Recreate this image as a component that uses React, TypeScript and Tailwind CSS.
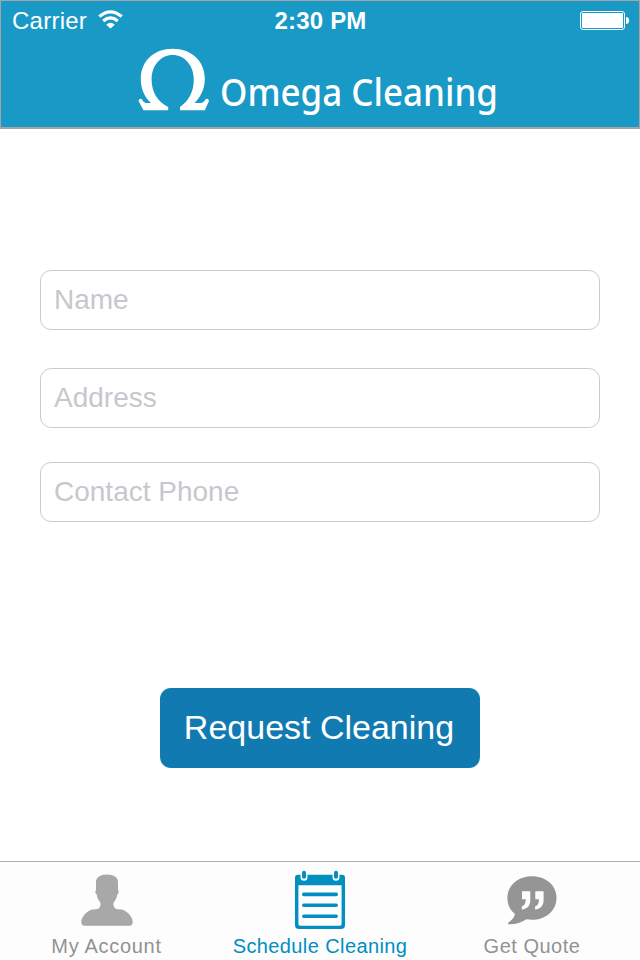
import type { ReactNode } from "react";

function StatusBar() {
  return (
    <div className="flex h-10 items-center text-white">
      <div className="flex flex-1 items-center pl-[11px]">
        <span className="text-[24px] leading-10 tracking-[0.25px]">Carrier</span>
        <svg className="mb-[3px] ml-[11px]" width="25" height="19" viewBox="0 0 25 19" fill="none">
          <path d="M1.3 6.5Q12.5-2.9 23.7 6.5" stroke="white" strokeWidth="3.2" />
          <path d="M5.2 10.9Q12.5 4.9 19.8 10.9" stroke="white" strokeWidth="3.2" />
          <path d="M8.2 14.7Q12.5 10.9 16.8 14.7L12.5 18.5Z" fill="white" />
        </svg>
      </div>
      <div className="text-[24px] font-bold leading-10 tracking-[0.2px]">2:30 PM</div>
      <div className="flex flex-1 items-center justify-end pb-px pr-[10px]">
        <div className="h-[19px] w-[45px] rounded-[3px] border border-white p-px">
          <div className="h-full w-full rounded-[1px] bg-white" />
        </div>
        <div className="ml-px h-[7px] w-[3px] rounded-r-[3px] bg-white" />
      </div>
    </div>
  );
}

function Logo() {
  return (
    <div className="flex h-[87px] pl-[136px]">
      <svg className="mt-[7px] shrink-0" width="73" height="64" viewBox="0 0 73 64" fill="white">
        <path d="M6.5 62.2L1.5 53Q2 50.3 4.4 50.8Q6.8 55 9.5 55H14C7.5 49 3.8 41 3.8 31C3.8 12.5 17.5.8 35.7.8S67.8 12.5 67.8 31C67.8 41 63.5 49 57.5 55H63.5Q66.5 55 69 50.8Q71.6 50.2 72 53L67.8 62.2H43V59C51.5 53 56.8 44 56.8 31.5C56.8 17.5 47.5 7 35.7 7S14.6 17.5 14.6 31.5C14.6 44 20.5 53.5 31.2 59V62.2Z" />
      </svg>
      <div className="ml-[10px] mt-[21px] origin-left scale-x-[0.92] whitespace-nowrap font-['Noto_Sans','Open_Sans',sans-serif] text-[38px] font-medium leading-[58px] text-white">
        Omega Cleaning
      </div>
    </div>
  );
}

function Field({ label }: { label: string }) {
  return (
    <input
      aria-label={label}
      placeholder={label}
      className="block h-[60px] w-full rounded-[11px] border border-[#cbcbcb] bg-white px-[13px] pb-px text-[28px] outline-none placeholder:text-[#c7c7cd]"
    />
  );
}

function Tab({ className, icon, children }: { className: string; icon: ReactNode; children: ReactNode }) {
  return (
    <button className={"flex flex-col items-center whitespace-nowrap text-[20px] leading-6 " + className}>
      <span className="flex h-[72px] items-start">{icon}</span>
      <span>{children}</span>
    </button>
  );
}

function PersonIcon() {
  return (
    <svg className="mt-[12px]" width="52" height="52" viewBox="0 0 52 52" fill="#a8a8a8">
      <path d="M26 .5C19 .5 15 3.5 15 8V16C13.8 17 14.2 19.5 15.7 20.5C16.2 24 17.5 26 19.3 28.5C20 32 18.8 34.7 15.5 35.2L11 35.6C6 37.5 1.5 41.5.3 47Q0 51.7 3.5 51.7H48.5Q52 51.7 51.7 47C50.5 41.5 46 37.5 41 35.6L36.5 35.2C33.2 34.7 32 32 32.7 28.5C34.5 26 35.8 24 36.3 20.5C37.8 19.5 38.2 17 37 16V8C37 3.5 33 .5 26 .5Z" />
    </svg>
  );
}

function CalendarIcon() {
  return (
    <svg className="mt-[8px]" width="50" height="60" viewBox="0 0 50 60">
      <path fill="#008fc0" fillRule="evenodd" d="M3 4.8H47Q50 4.8 50 7.8V55Q50 59 46 59H4Q0 59 0 55V7.8Q0 4.8 3 4.8ZM3.4 15.2V54Q3.4 55.8 5.2 55.8H44.8Q46.6 55.8 46.6 54V15.2Z" />
      <path d="M9 3.3V7.2M41 3.3V7.2" stroke="#fdfdfd" strokeWidth="7" strokeLinecap="round" />
      <path d="M9 2.7V6.7M41 2.7V6.7" stroke="#008fc0" strokeWidth="4" strokeLinecap="round" />
      <path d="M8.8 24.4H41.2M8.8 35.3H41.2M8.8 46.2H41.2" stroke="#008fc0" strokeWidth="3.6" strokeLinecap="round" />
    </svg>
  );
}

function QuoteIcon() {
  return (
    <svg className="mt-[14px]" width="50" height="49" viewBox="0 0 50 49">
      <path fill="#959595" d="M25 .3C38.7.3 49.5 9 49.5 22S38.5 43.8 25 43.8L19.5 43.2C14.5 46.5 8 48.5 1.5 48.2Q.3 47.5 1.5 46.5C5 44 7.5 41 8 38C3 34 .4 28.5.4 22C.4 9 11.3.3 25 .3Z" />
      <path fill="#fdfdfd" d="M15 15.3H23.3V24C23.3 29.5 20.5 33 14.8 33.5V30.4C17.5 29.6 18.7 27 18.8 23.3H15ZM28.3 15.3H36.6V24C36.6 29.5 33.8 33 28.1 33.5V30.4C30.8 29.6 32 27 32.1 23.3H28.3Z" />
    </svg>
  );
}

export default function App() {
  return (
    <div className="flex h-[960px] w-[640px] flex-col overflow-hidden bg-white font-['Liberation_Sans',Arial,sans-serif]">
      <header className="h-[129px] shrink-0 border border-b-2 border-[#a5a5a5] bg-[#1899c6]">
        <StatusBar />
        <Logo />
      </header>
      <main className="flex flex-1 flex-col bg-white px-10 pt-[141px]">
        <Field label="Name" />
        <div className="mt-[38px]">
          <Field label="Address" />
        </div>
        <div className="mt-[34px]">
          <Field label="Contact Phone" />
        </div>
        <button className="mt-[166px] h-20 w-80 self-center rounded-[11px] bg-[#117ab1] pb-[2px] pr-[2px] text-[34px] leading-[78px] text-white">
          Request Cleaning
        </button>
      </main>
      <nav className="flex h-[99px] shrink-0 border-t border-[#b0b0b0] bg-[#fdfdfd]">
        <Tab className="w-[213px] tracking-[0.7px] text-[#929292]" icon={<PersonIcon />}>
          My Account
        </Tab>
        <Tab className="w-[214px] tracking-[0.4px] text-[#008fc0]" icon={<CalendarIcon />}>
          Schedule Cleaning
        </Tab>
        <Tab className="w-[210px] tracking-[0.5px] text-[#929292]" icon={<QuoteIcon />}>
          Get Quote
        </Tab>
      </nav>
    </div>
  );
}
